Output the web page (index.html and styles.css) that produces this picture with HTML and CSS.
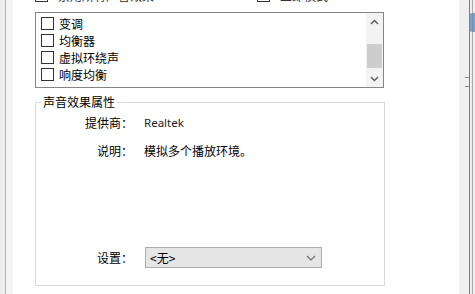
FILE: index.html
```html
<!DOCTYPE html>
<html lang="zh-CN">
<head>
<meta charset="utf-8">
<title>声音效果</title>
<link rel="stylesheet" href="styles.css">
</head>
<body>
<div class="window">
  <div class="edge-left">
    <div class="el-fill"></div>
    <div class="el-line"></div>
    <div class="el-pad"></div>
  </div>
  <div class="page">
    <div class="top-row">
      <div class="top-opt first"><span class="box"></span><span>禁用所有声音效果</span></div>
      <div class="top-opt"><span class="box"></span><span>立即模式</span></div>
    </div>
    <div class="listbox">
      <ul class="items">
        <li class="item"><span class="box"></span><span>变调</span></li>
        <li class="item"><span class="box"></span><span>均衡器</span></li>
        <li class="item"><span class="box"></span><span>虚拟环绕声</span></li>
        <li class="item"><span class="box"></span><span>响度均衡</span></li>
      </ul>
      <div class="scrollbar">
        <div class="arrow">
          <svg width="9" height="6" viewBox="0 0 9 6"><path d="M1 5 L4.5 1.5 L8 5" fill="none" stroke="#5a5a5a" stroke-width="1.4"/></svg>
        </div>
        <div class="track"><div class="thumb"></div></div>
        <div class="arrow">
          <svg width="9" height="6" viewBox="0 0 9 6"><path d="M1 1 L4.5 4.5 L8 1" fill="none" stroke="#5a5a5a" stroke-width="1.4"/></svg>
        </div>
      </div>
    </div>
    <fieldset class="group">
      <legend class="group-title">声音效果属性</legend>
      <div class="prop first">
        <div class="prop-label">提供商：</div>
        <div class="prop-value latin">Realtek</div>
      </div>
      <div class="prop desc">
        <div class="prop-label">说明：</div>
        <div class="prop-value">模拟多个播放环境。</div>
      </div>
      <div class="prop setting">
        <div class="prop-label">设置：</div>
        <div class="select">
          <span class="select-text">&lt;无&gt;</span>
          <svg class="select-arrow" width="10" height="6" viewBox="0 0 10 6"><path d="M1 1 L5 5 L9 1" fill="none" stroke="#6a6a6a" stroke-width="1.1"/></svg>
        </div>
      </div>
    </fieldset>
  </div>
  <div class="edge-right">
    <div class="er-fill"></div>
    <div class="er-line"></div>
    <div class="er-gap"></div>
    <div class="er-line light"></div>
    <div class="er-end"></div>
    <div class="er-blob"></div>
    <div class="er-tick t1"></div>
    <div class="er-tick t2"></div>
  </div>
</div>
</body>
</html>
```
FILE: styles.css
```css
html, body {
  margin: 0;
  padding: 0;
  background: #ffffff;
}
body {
  font-family: "Noto Sans CJK SC", "Noto Sans", sans-serif;
  font-size: 12px;
  line-height: 14px;
  color: #000;
}
.window {
  width: 475px;
  height: 294px;
  overflow: hidden;
  display: flex;
}
.edge-left {
  display: flex;
  width: 13px;
  flex: none;
}
.el-fill { width: 5px; background: #eeeeee; }
.el-line { width: 1px; background: #b4b4b4; }
.el-pad { width: 7px; background: #f4f4f4; }

.page {
  flex: none;
  width: 446px;
  padding-left: 22px;
  box-sizing: border-box;
  background: #ffffff;
}
.top-row {
  display: flex;
  height: 13px;
  margin-top: -11px;
  color: #333;
}
.top-opt {
  display: flex;
  align-items: center;
  gap: 10px;
}
.top-opt.first { width: 222px; }
.box {
  width: 11px;
  height: 11px;
  border: 1px solid #333333;
  background: #fff;
  flex: none;
}
.listbox {
  margin-top: 10px;
  width: 349px;
  height: 76px;
  box-sizing: border-box;
  border: 1px solid #858585;
  display: flex;
}
.items {
  list-style: none;
  margin: 0;
  padding: 2px 0 0 5px;
  flex: 1;
}
.item {
  height: 17px;
  display: flex;
  align-items: center;
  gap: 5px;
}
.scrollbar {
  width: 17px;
  background: #f3f3f3;
  display: flex;
  flex-direction: column;
}
.arrow {
  height: 17px;
  display: flex;
  align-items: center;
  justify-content: center;
}
.track {
  flex: 1;
  padding: 0 1px;
}
.thumb {
  margin-top: 14px;
  height: 24px;
  background: #cdcdcd;
}
.group {
  margin: 7px 0 0 0;
  width: 350px;
  box-sizing: border-box;
  border: 1px solid #d9d9d9;
  padding: 0 0 17px 0;
  min-width: 0;
}
.group-title {
  margin-left: 5px;
  padding: 0 2px;
}
.prop {
  display: flex;
  align-items: center;
}
.prop.first { margin-top: 7px; }
.prop.desc { margin-top: 14px; }
.prop.setting { margin-top: 89px; }
.prop-label {
  width: 97px;
  text-align: right;
  flex: none;
}
.prop-value {
  margin-left: 11px;
}
.latin {
  font-family: "Noto Sans", sans-serif;
  font-size: 11.5px;
  color: #222;
}
.select {
  margin-left: 12px;
  width: 177px;
  height: 21px;
  box-sizing: border-box;
  border: 1px solid #adadad;
  background: #e5e5e5;
  display: flex;
  align-items: center;
  justify-content: space-between;
  padding: 0 5px 0 4px;
}
.edge-right {
  position: relative;
  flex: none;
  width: 16px;
  display: flex;
}
.er-fill { width: 10px; background: #f0f0f0; }
.er-line { width: 1px; background: #7c7c7c; }
.er-line.light { background: #a8a8a8; }
.er-gap { width: 2px; background: #ededed; }
.er-end { width: 2px; background: #f0f0f0; }
.er-blob {
  position: absolute;
  left: 10px;
  top: 13px;
  width: 6px;
  height: 19px;
  border-radius: 4px 0 0 4px;
  background: #5f8dbd;
  opacity: 0.8;
}
.er-tick {
  position: absolute;
  left: 6px;
  width: 4px;
  height: 1px;
  background: #8a8a8a;
}
.er-tick.t1 { top: 77px; }
.er-tick.t2 { top: 86px; }
```
